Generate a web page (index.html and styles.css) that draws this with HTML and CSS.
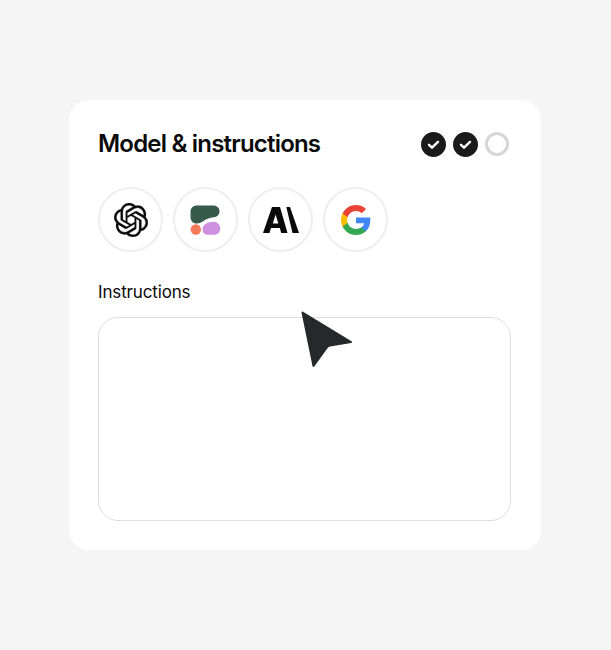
FILE: index.html
```html
<!DOCTYPE html>
<html lang="en">
<head>
    <meta charset="UTF-8">
    <meta name="viewport" content="width=device-width, initial-scale=1.0">
    <title>Model &amp; instructions</title>
    <link rel="stylesheet" href="styles.css">
</head>
<body>
    <div class="card">
        <div class="card-header">
            <h2 class="title">Model &amp; instructions</h2>
            <div class="steps">
                <span class="step done">
                    <svg viewBox="0 0 25 25" fill="none"><path d="M8 12.8l3 2.9 6-5.8" stroke="currentColor" stroke-width="2.4" stroke-linecap="round" stroke-linejoin="round"/></svg>
                </span>
                <span class="step done">
                    <svg viewBox="0 0 25 25" fill="none"><path d="M8 12.8l3 2.9 6-5.8" stroke="currentColor" stroke-width="2.4" stroke-linecap="round" stroke-linejoin="round"/></svg>
                </span>
                <span class="step"></span>
            </div>
        </div>

        <div class="models">
            <!-- OpenAI -->
            <div class="model">
                <svg class="logo-openai" viewBox="0 0 24 24"><path fill="#0a0a0a" stroke="#0a0a0a" stroke-width="0.2" d="M22.2819 9.8211a5.9847 5.9847 0 0 0-.5157-4.9108 6.0462 6.0462 0 0 0-6.5098-2.9A6.0651 6.0651 0 0 0 4.9807 4.1818a5.9847 5.9847 0 0 0-3.9977 2.9 6.0462 6.0462 0 0 0 .7427 7.0966 5.98 5.98 0 0 0 .511 4.9107 6.051 6.051 0 0 0 6.5146 2.9001A5.9847 5.9847 0 0 0 13.2599 24a6.0557 6.0557 0 0 0 5.7718-4.2058 5.9894 5.9894 0 0 0 3.9977-2.9001 6.0557 6.0557 0 0 0-.7475-7.0729zm-9.022 12.6081a4.4755 4.4755 0 0 1-2.8764-1.0408l.1419-.0804 4.7783-2.7582a.7948.7948 0 0 0 .3927-.6813v-6.7369l2.02 1.1686a.071.071 0 0 1 .038.052v5.5826a4.504 4.504 0 0 1-4.4945 4.4944zm-9.6607-4.1254a4.4708 4.4708 0 0 1-.5346-3.0137l.142.0852 4.783 2.7582a.7712.7712 0 0 0 .7806 0l5.8428-3.3685v2.3324a.0804.0804 0 0 1-.0332.0615L9.74 19.9502a4.4992 4.4992 0 0 1-6.1408-1.6464zM2.3408 7.8956a4.485 4.485 0 0 1 2.3655-1.9728V11.6a.7664.7664 0 0 0 .3879.6765l5.8144 3.3543-2.0201 1.1685a.0757.0757 0 0 1-.071 0l-4.8303-2.7865A4.504 4.504 0 0 1 2.3408 7.872zm16.5963 3.8558L13.1038 8.364 15.1192 7.2a.0757.0757 0 0 1 .071 0l4.8303 2.7913a4.4944 4.4944 0 0 1-.6765 8.1042v-5.6772a.79.79 0 0 0-.407-.667zm2.0107-3.0231l-.142-.0852-4.7735-2.7818a.7759.7759 0 0 0-.7854 0L9.409 9.2297V6.8974a.0662.0662 0 0 1 .0284-.0615l4.8303-2.7866a4.4992 4.4992 0 0 1 6.6802 4.66zM8.3065 12.863l-2.02-1.1638a.0804.0804 0 0 1-.038-.0567V6.0742a4.4992 4.4992 0 0 1 7.3757-3.4537l-.142.0805L8.704 5.459a.7948.7948 0 0 0-.3927.6813zm1.0976-2.3654l2.602-1.4998 2.6069 1.4998v2.9994l-2.5974 1.4997-2.6067-1.4997Z"/></svg>
            </div>
            <!-- Blobs -->
            <div class="model">
                <svg class="logo-blobs" viewBox="0 0 31 30">
                    <path fill="#375a4c" d="M.5 7C.5 3 3 .5 7 .5h16.500c3.500 0 6 2.500 6 5.500 0 3.500-2 5.800-5.500 6.300-4 .5-7.500 1.700-10.500 3.700-2 1.500-4 2.500-6.500 2.500-4 0-6.500-2.500-6.500-6.500z"/>
                    <circle cx="5.800" cy="24.500" r="5.200" fill="#f4785a"/>
                    <path fill="#cf8fe0" d="M12.500 24c0-4 4.500-7.300 11-7.300 4.200 0 6.700 3.300 6.700 6.800 0 3.800-2.500 6.300-6.200 6.300h-6.500c-3 0-5-2.500-5-5.800z"/>
                </svg>
            </div>
            <!-- Anthropic -->
            <div class="model">
                <svg class="logo-anthropic" viewBox="0 0 36 26">
                    <path fill="#0a0a0a" fill-rule="evenodd" d="M9 0h8l7.500 26h-6.300L16.800 21H7.900l-1.400 5H0zM12.600 7.500L9.800 16.500h5.500z"/>
                    <path fill="#0a0a0a" d="M23.300 0h3.700L36 26h-6.500z"/>
                </svg>
            </div>
            <!-- Google -->
            <div class="model">
                <svg class="logo-google" viewBox="0 0 24 24">
                    <path fill="#4285F4" d="M23.490 12.270c0-.790-.070-1.540-.190-2.270H12v4.510h6.470c-.290 1.480-1.140 2.730-2.400 3.580v3h3.860c2.260-2.090 3.560-5.170 3.560-8.820z"/>
                    <path fill="#34A853" d="M12 24c3.240 0 5.950-1.080 7.930-2.910l-3.860-3c-1.080.720-2.450 1.160-4.070 1.160-3.130 0-5.780-2.110-6.730-4.960H1.290v3.090C3.260 21.300 7.310 24 12 24z"/>
                    <path fill="#FBBC05" d="M5.270 14.290c-.250-.720-.380-1.490-.380-2.290s.140-1.570.380-2.290V6.620H1.290C.470 8.240 0 10.060 0 12s.470 3.760 1.290 5.380l3.980-3.090z"/>
                    <path fill="#EA4335" d="M12 4.750c1.770 0 3.350.610 4.600 1.800l3.420-3.420C17.950 1.190 15.240 0 12 0 7.310 0 3.260 2.700 1.290 6.620l3.980 3.090C6.220 6.860 8.870 4.750 12 4.750z"/>
                </svg>
            </div>
        </div>

        <label class="field-label" for="instructions">Instructions</label>
        <textarea class="field-input" id="instructions"></textarea>

        <svg class="cursor" viewBox="0 0 52 57">
            <path fill="#26282a" stroke="#26282a" stroke-width="2" stroke-linejoin="round" d="M1.500 1.500L50 31l-21 3.500c-1.500.3-2.500 1-3.300 2.200L12.500 55z"/>
        </svg>
    </div>
</body>
</html>
```

FILE: styles.css
```css
* {
    box-sizing: border-box;
}
body {
    font-family: Inter, 'Liberation Sans', sans-serif;
    color: #0a0a0a;
    background: #f5f5f5;
    margin: 0;
    padding: 100px 70px 100px 69px;
}
.card {
    position: relative;
    background: white;
    border-radius: 20px;
    width: 472px;
    height: 450px;
    padding: 29px 30px 29px 29px;
}
.card-header {
    display: flex;
    align-items: center;
    justify-content: space-between;
    height: 30px;
}
.title {
    font-size: 24px;
    font-weight: 600;
    letter-spacing: -0.8px;
    margin: 0 0 2px;
}
.steps {
    display: flex;
    gap: 7px;
    margin-right: 2px;
    padding-left: 1px;
}
.step {
    width: 24px;
    height: 24px;
    border-radius: 50%;
    border: 3px solid #d6d6d6;
}
.step.done {
    width: 25px;
    height: 25px;
    background: #1a1a1a;
    border: none;
    color: white;
}
.step svg {
    display: block;
}
.models {
    display: flex;
    gap: 10px;
    margin-top: 28px;
}
.model {
    width: 65px;
    height: 65px;
    border-radius: 50%;
    border: 2px solid #eeeeee;
    display: flex;
    align-items: center;
    justify-content: center;
}
.logo-openai {
    width: 34px;
    height: 34px;
}
.logo-blobs {
    width: 31px;
    height: 30px;
}
.logo-anthropic {
    width: 36px;
    height: 26px;
}
.logo-google {
    width: 30px;
    height: 30px;
}
.field-label {
    display: block;
    font-size: 17px;
    line-height: 24px;
    letter-spacing: -0.15px;
    margin-top: 28px;
}
.field-input {
    display: block;
    width: 413px;
    height: 204px;
    margin-top: 13px;
    background: white;
    border: 1px solid #dddddd;
    border-radius: 20px;
    resize: none;
}
.cursor {
    position: absolute;
    left: 232px;
    top: 211px;
    width: 52px;
    height: 57px;
}
```
